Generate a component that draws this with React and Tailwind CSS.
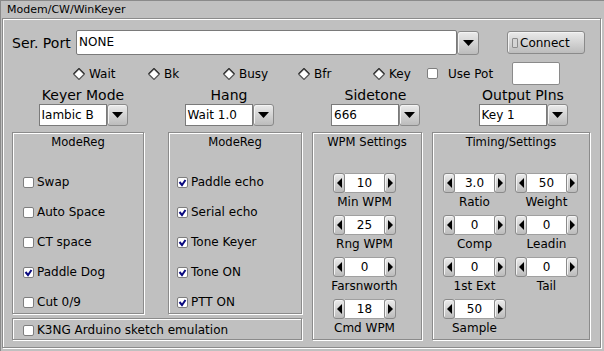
import React from "react";

const ENG = "border border-[#8b8b8b] shadow-[inset_1px_1px_0_#fff,1px_1px_0_#fff]";
const BTN = "border border-[#8a8a8a] rounded-[3px] bg-linear-to-b from-[#ebebeb] to-[#bcbcbc] shadow-[inset_1px_1px_0_#f4f4f4]";

function DownTri() {
  return (
    <svg width="11" height="6" viewBox="0 0 11 6">
      <polygon points="0,0 11,0 5.5,6" fill="#000" />
    </svg>
  );
}

function SideTri({ dir }) {
  return (
    <svg width="5" height="10" viewBox="0 0 5 10">
      {dir === "left" ? (
        <polygon points="5,0 5,10 0,5" fill="#000" />
      ) : (
        <polygon points="0,0 0,10 5,5" fill="#000" />
      )}
    </svg>
  );
}

function Diamond() {
  return (
    <svg width="12" height="12" viewBox="0 0 12 12" className="shrink-0">
      <polygon points="6,0.5 11.5,6 6,11.5 0.5,6" fill="#fff" />
      <polyline points="0.5,6 6,0.5 11.5,6" fill="none" stroke="#222" strokeWidth="1.2" />
      <polyline points="0.5,6 6,11.5 11.5,6" fill="none" stroke="#555" strokeWidth="1.2" />
      <polyline points="2,6 6,2 10,6" fill="none" stroke="#c8c8c8" strokeWidth="1" />
    </svg>
  );
}

function Box({ checked }) {
  return (
    <span className="w-[11px] h-[11px] shrink-0 bg-white border border-[#7e7e7e] rounded-[2px] flex items-center justify-center">
      {checked && (
        <svg width="9" height="9" viewBox="0 0 9 9">
          <polyline points="1.5,4 4,7 7.5,2" fill="none" stroke="#0a0a80" strokeWidth="2" />
        </svg>
      )}
    </span>
  );
}

function Check({ checked, label }) {
  return (
    <div className="flex items-center h-[30px]">
      <Box checked={checked} />
      <span className="ml-[3px] text-[12px] leading-[14px]">{label}</span>
    </div>
  );
}

function Radio({ label, w }) {
  return (
    <div className={"flex items-center " + w}>
      <span className="ml-[1px]"><Diamond /></span>
      <span className="ml-[4px] text-[12px]">{label}</span>
    </div>
  );
}

function Choice({ value }) {
  return (
    <div className="flex h-[22px] mt-[1px]">
      <div className="w-[68px] h-[22px] bg-white border border-[#7a7a7a] text-[12px] leading-[20px] pl-[2px]">{value}</div>
      <div className={"w-[21px] h-[22px] flex items-center justify-center " + BTN}>
        <DownTri />
      </div>
    </div>
  );
}

function ArrowBtn({ dir }) {
  return (
    <div className={"w-[12px] h-[20px] flex items-center justify-center " + BTN}>
      <SideTri dir={dir} />
    </div>
  );
}

function Counter({ value, label }) {
  return (
    <div className="flex flex-col items-center w-[63px] h-[42px]">
      <div className="flex h-[20px] w-[63px]">
        <ArrowBtn dir="left" />
        <div className="w-[39px] h-[20px] bg-white border-y border-[#a0a0a0] text-center text-[12px] leading-[18px]">{value}</div>
        <ArrowBtn dir="right" />
      </div>
      <div className="mt-[2px] h-[14px] leading-[14px] text-[12px] whitespace-nowrap">{label}</div>
    </div>
  );
}

function Col({ w, label, value }) {
  return (
    <div className={"flex flex-col items-center " + w}>
      <div className="text-[14px] leading-[16px] h-[16px]">{label}</div>
      <Choice value={value} />
    </div>
  );
}

function Title({ children }) {
  return <div className="mt-[2px] h-[14px] leading-[14px] text-[11.6px] text-center whitespace-nowrap">{children}</div>;
}

export default function App() {
  return (
    <div className="w-[604px] h-[351px] bg-[#c0c0c0] text-black border-t border-l border-[#8a8a8a] font-['DejaVu_Sans',sans-serif] overflow-hidden">
      <div className="h-[17px] pl-[6px] text-[11px] leading-[18px]">Modem/CW/WinKeyer</div>
      <div className={"ml-[1px] w-[599px] h-[330px] " + ENG}>
        {/* Row 1 */}
        <div className="flex items-center mt-[11px] h-[25px]">
          <div className="ml-[9px] w-[64px] text-[14px] leading-[16px]">Ser. Port</div>
          <div className="w-[381px] h-[25px] bg-white border border-[#7a7a7a] rounded-[2px] text-[12px] leading-[23px] pl-[2px]">NONE</div>
          <div className={"w-[22px] h-[24px] flex items-center justify-center " + BTN}>
            <DownTri />
          </div>
          <div className={"ml-[28px] w-[78px] h-[23px] flex items-center " + BTN}>
            <span className="ml-[4px] w-[6px] h-[10px] border border-[#8c8c8c] bg-[#d4d4d4] rounded-[1px]" />
            <span className="ml-[2px] text-[12px]">Connect</span>
          </div>
        </div>
        {/* Row 2 */}
        <div className="flex items-center mt-[7px] h-[23px]">
          <div className="ml-[69px] flex items-center">
            <Radio label="Wait" w="w-[75px]" />
            <Radio label="Bk" w="w-[75px]" />
            <Radio label="Busy" w="w-[75px]" />
            <Radio label="Bfr" w="w-[75px]" />
            <Radio label="Key" w="w-[55px]" />
            <div className="flex items-center w-[85px]">
              <Box checked={false} />
              <span className="ml-[10px] text-[12px]">Use Pot</span>
            </div>
            <div className="w-[48px] h-[23px] bg-white border border-[#8a8a8a] rounded-[2px]" />
          </div>
        </div>
        {/* Row 3 */}
        <div className="flex mt-[2px] ml-[7px]">
          <Col w="w-[146px]" label="Keyer Mode" value="Iambic B" />
          <Col w="w-[146px]" label="Hang" value="Wait 1.0" />
          <Col w="w-[147px]" label="Sidetone" value="666" />
          <Col w="w-[148px]" label="Output PIns" value="Key 1" />
        </div>
        {/* Row 4 */}
        <div className="flex mt-[6px] ml-[9px]">
          <div className="flex flex-col w-[290px]">
            <div className="flex">
              <div className={"w-[132px] h-[182px] " + ENG}>
                <Title>ModeReg</Title>
                <div className="mt-[18px] pl-[10px]">
                  <Check label="Swap" />
                  <Check label="Auto Space" />
                  <Check label="CT space" />
                  <Check label="Paddle Dog" checked />
                  <Check label="Cut 0/9" />
                </div>
              </div>
              <div className={"ml-[24px] w-[134px] h-[182px] " + ENG}>
                <Title>ModeReg</Title>
                <div className="mt-[18px] pl-[8px]">
                  <Check label="Paddle echo" checked />
                  <Check label="Serial echo" checked />
                  <Check label="Tone Keyer" checked />
                  <Check label="Tone ON" checked />
                  <Check label="PTT ON" checked />
                </div>
              </div>
            </div>
            <div className={"mt-[4px] w-[290px] h-[22px] flex items-center pl-[10px] pt-[2px] " + ENG}>
              <Box checked={false} />
              <span className="ml-[3px] text-[12px]">K3NG Arduino sketch emulation</span>
            </div>
          </div>
          <div className={"ml-[10px] w-[110px] h-[208px] " + ENG}>
            <Title>WPM Settings</Title>
            <div className="mt-[24px] pl-[20px] flex flex-col">
              <Counter value="10" label="Min WPM" />
              <Counter value="25" label="Rng WPM" />
              <Counter value="0" label="Farsnworth" />
              <Counter value="18" label="Cmd WPM" />
            </div>
          </div>
          <div className={"ml-[10px] w-[158px] h-[208px] " + ENG}>
            <Title>Timing/Settings</Title>
            <div className="mt-[24px] pl-[10px] grid grid-cols-[63px_63px] gap-x-[9px]">
              <Counter value="3.0" label="Ratio" />
              <Counter value="50" label="Weight" />
              <Counter value="0" label="Comp" />
              <Counter value="0" label="Leadin" />
              <Counter value="0" label="1st Ext" />
              <Counter value="0" label="Tail" />
              <Counter value="50" label="Sample" />
            </div>
          </div>
        </div>
      </div>
    </div>
  );
}
